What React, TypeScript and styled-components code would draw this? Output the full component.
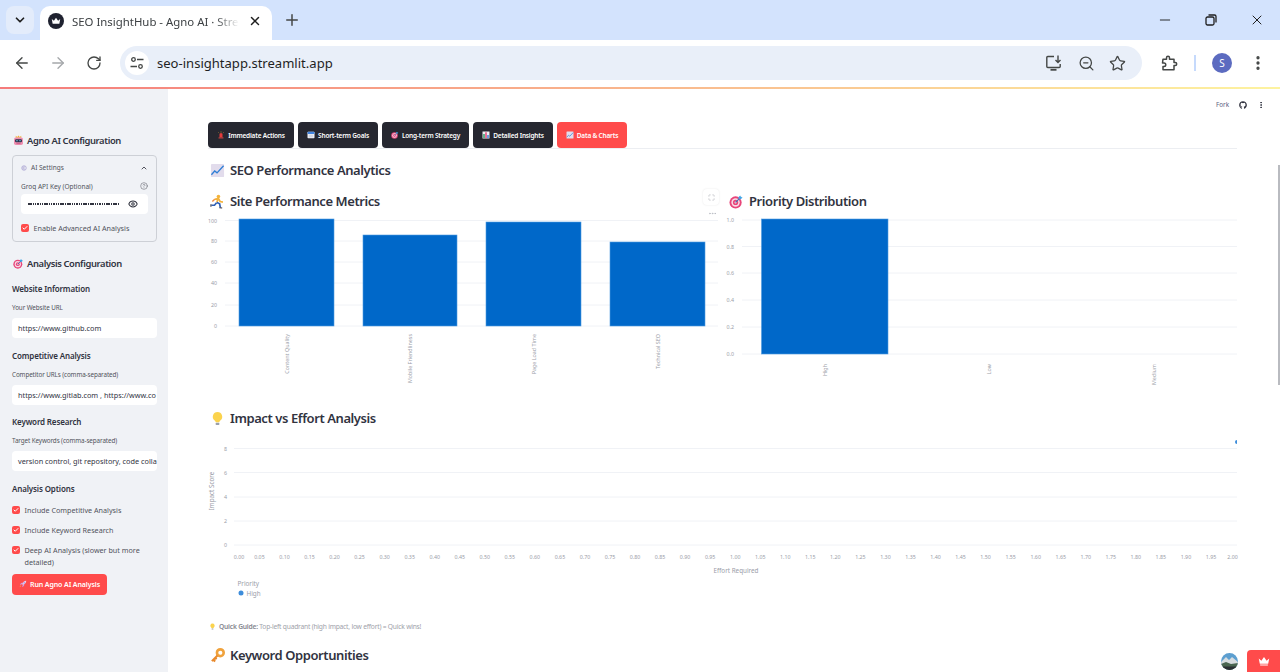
import React, { FC } from "react";
import styled, { createGlobalStyle } from "styled-components";
import {
  ArrowLeft,
  ArrowRight,
  Check,
  ChevronDown,
  ChevronUp,
  CircleHelp,
  EllipsisVertical,
  Eye,
  Maximize,
  Minus,
  MoreHorizontal,
  Plus,
  RotateCw,
  Star,
  X,
  ZoomOut,
} from "lucide-react";
import { FaGithub } from "react-icons/fa";

const GlobalStyle = createGlobalStyle`
  html, body {
    margin: 0;
    padding: 0;
    height: 100%;
    overflow: hidden;
    background: #fff;
  }
  * {
    box-sizing: border-box;
  }
  #root {
    height: 672px;
  }
`;

const APP_FONT = `"Noto Sans", "Open Sans", sans-serif`;
const CHROME_FONT = `"Noto Sans", "Open Sans", sans-serif`;

const Page = styled.div`
  position: relative;
  width: 1280px;
  height: 672px;
  overflow: hidden;
  display: flex;
  flex-direction: column;
  font-family: ${APP_FONT};
  color: #31333f;
`;

/* browser frame */
const TabStrip = styled.div`
  height: 40px;
  flex: none;
  background: #d3e3fd;
  display: flex;
  align-items: flex-end;
  padding-left: 6px;
  color: #1f1f1f;
`;
const TabSearch = styled.div`
  width: 28px;
  height: 28px;
  margin-bottom: 6px;
  border-radius: 8px;
  background: #e3ecfb;
  display: flex;
  align-items: center;
  justify-content: center;
`;
const BrowserTab = styled.div`
  width: 232px;
  height: 34px;
  margin-left: 6px;
  padding: 0 8px 4px 8px;
  background: #fff;
  border-radius: 10px 10px 0 0;
  display: flex;
  align-items: center;
`;
const TabTitle = styled.span`
  margin-left: 8px;
  width: 167px;
  overflow: hidden;
  white-space: nowrap;
  font-family: ${CHROME_FONT};
  font-size: 11.4px;
  color: #3c4043;
  mask-image: linear-gradient(90deg, #000 86%, transparent);
`;
const TabClose = styled.span`
  display: flex;
  margin-left: 9px;
`;
const NewTab = styled.div`
  display: flex;
  margin: 0 0 11px 11px;
  color: #444746;
`;
const WindowControls = styled.div`
  margin-left: auto;
  height: 40px;
  display: flex;
  align-items: center;
  gap: 30px;
  padding-right: 15px;
`;
const WindowIcon = styled.span`
  width: 16px;
  display: flex;
  justify-content: center;
`;
const Toolbar = styled.div`
  height: 47px;
  flex: none;
  background: #fff;
  display: flex;
  align-items: flex-start;
  padding: 6px 0 0 13px;
  border-radius: 8px 8px 0 0;
  position: relative;
  z-index: 1;
`;
const NavIcon = styled.span<{ $muted?: boolean }>`
  width: 18px;
  height: 34px;
  margin-right: 18px;
  display: flex;
  align-items: center;
  justify-content: center;
  color: ${(p) => (p.$muted ? "#a5a8ab" : "#444746")};
`;
const Omnibox = styled.div`
  width: 1022px;
  height: 34px;
  margin-left: -1px;
  border-radius: 17px;
  background: #e9eff9;
  display: flex;
  align-items: center;
  padding: 0 16px 0 5px;
  color: #444746;
`;
const SiteInfo = styled.span`
  width: 24px;
  height: 24px;
  border-radius: 50%;
  background: #fff;
  display: flex;
  align-items: center;
  justify-content: center;
`;
const UrlText = styled.span`
  margin-left: 8px;
  font-family: ${CHROME_FONT};
  font-size: 13.05px;
  color: #1f1f1f;
`;
const OmniActions = styled.div`
  margin-left: auto;
  display: flex;
  align-items: center;
  gap: 14.5px;
`;
const ToolbarRight = styled.div`
  display: flex;
  align-items: center;
  height: 34px;
  margin-left: 18px;
  color: #444746;
`;
const ToolbarDivider = styled.span`
  width: 2px;
  height: 16px;
  margin: 0 16px 0 16px;
  background: #c6dafc;
`;
const ProfileBadge = styled.span`
  width: 20px;
  height: 20px;
  border-radius: 50%;
  background: #5c6bc0;
  color: #fff;
  font-family: ${CHROME_FONT};
  font-size: 10px;
  display: flex;
  align-items: center;
  justify-content: center;
  margin-right: 17px;
`;
const Decoration = styled.div`
  height: 2px;
  flex: none;
  background: linear-gradient(90deg, #f57b7b, #fdf3a0);
`;

/* streamlit app */
const Body = styled.div`
  flex: 1;
  min-height: 0;
  display: flex;
`;
const Sidebar = styled.aside`
  width: 168px;
  flex: none;
  background: #f0f2f6;
  padding: 44px 11px 0 12px;
`;
const SideTitle = styled.div<{ $top?: number }>`
  height: 14px;
  margin-top: ${(p) => p.$top ?? 0}px;
  display: flex;
  align-items: center;
  gap: 3px;
  font-size: 9.4px;
  font-weight: 600;
  letter-spacing: -0.38px;
  white-space: nowrap;
  padding-left: 1px;
`;
const Expander = styled.div`
  margin-top: 8px;
  height: 87px;
  border: 1px solid #cdd0d6;
  border-radius: 4px;
  padding: 0 8px;
`;
const ExpanderHead = styled.div`
  height: 23px;
  display: flex;
  align-items: center;
  gap: 4px;
  font-size: 6.5px;
  color: #50525c;
  & > svg:last-child {
    margin-left: auto;
    color: #31333f;
  }
`;
const KeyLabel = styled.div`
  height: 14px;
  display: flex;
  align-items: center;
  justify-content: space-between;
  font-size: 6.5px;
  color: #50525c;
`;
const KeyInput = styled.div`
  margin-top: 1px;
  height: 20px;
  background: #fff;
  border-radius: 4px;
  display: flex;
  align-items: center;
  justify-content: space-between;
  padding: 0 10px 0 7px;
`;
const KeyDots = styled.span`
  width: 91px;
  height: 1.5px;
  background: repeating-linear-gradient(90deg, #31333f 0 1.5px, transparent 1.5px 2.3px);
`;
const CheckRow = styled.label<{ $top?: number }>`
  display: flex;
  align-items: flex-start;
  gap: 4.5px;
  margin-top: ${(p) => p.$top ?? 0}px;
  font-size: 7.2px;
  line-height: 12px;
  color: #50525c;
`;
const CheckBox = styled.span`
  width: 8px;
  height: 8px;
  flex: none;
  margin-top: 2px;
  border-radius: 2px;
  background: #ff4b4b;
  color: #fff;
  display: flex;
  align-items: center;
  justify-content: center;
`;
const GroupTitle = styled.div<{ $top: number }>`
  height: 12px;
  line-height: 12px;
  margin-top: ${(p) => p.$top}px;
  font-size: 8px;
  font-weight: 600;
  letter-spacing: -0.15px;
`;
const FieldLabel = styled.div`
  height: 10px;
  line-height: 10px;
  margin-top: 8px;
  font-size: 6.3px;
  letter-spacing: -0.1px;
  color: #50525c;
  white-space: nowrap;
`;
const TextField = styled.div`
  height: 20px;
  margin-top: 5px;
  background: #fff;
  border-radius: 4px;
  padding: 0 5px 0 6px;
  font-size: 7.3px;
  line-height: 20px;
  color: #31333f;
  white-space: nowrap;
  overflow: hidden;
`;
const RunButton = styled.div`
  width: 95px;
  height: 21px;
  margin-top: 6px;
  border-radius: 4px;
  background: #ff4b4b;
  color: #fff;
  font-size: 7px;
  font-weight: 600;
  letter-spacing: -0.1px;
  display: flex;
  align-items: center;
  justify-content: center;
  gap: 3px;
`;

const Main = styled.main`
  position: relative;
  flex: 1;
  min-width: 0;
  padding: 33px 43px 0 40px;
  background: #fff;
`;
const AppHeader = styled.div`
  position: absolute;
  top: 11px;
  right: 15px;
  display: flex;
  align-items: center;
  gap: 10px;
  font-size: 6.3px;
  color: #5b6180;
`;
const TabList = styled.div`
  display: flex;
  gap: 4px;
  height: 27px;
  border-bottom: 1px solid #eceef2;
`;
const TabButton = styled.div<{ $w: number; $active?: boolean }>`
  width: ${(p) => p.$w}px;
  height: 26px;
  border-radius: 4px;
  background: ${(p) => (p.$active ? "#ff4b4b" : "#262730")};
  color: #fff;
  font-size: 6.5px;
  font-weight: 600;
  letter-spacing: -0.2px;
  display: flex;
  align-items: center;
  justify-content: center;
  gap: 3px;
  white-space: nowrap;
`;
const Heading = styled.h3<{ $top: number }>`
  height: 20px;
  margin: ${(p) => p.$top}px 0 0 0;
  display: flex;
  align-items: center;
  gap: 5px;
  font-size: 13px;
  font-weight: 600;
  letter-spacing: -0.42px;
  white-space: nowrap;
  padding-left: 2px;
`;
const ChartColumns = styled.div`
  display: grid;
  grid-template-columns: 510px 510px;
  column-gap: 9px;
`;
const ChartColumn = styled.section`
  position: relative;
`;
const ChartSvg = styled.svg`
  display: block;
  width: 100%;
  margin-top: 4px;
  font-family: ${APP_FONT};
  overflow: visible;
`;
const ChartTools = styled.div`
  position: absolute;
  top: 9px;
  right: -1px;
  width: 16px;
  height: 16px;
  border-radius: 4px;
  background: #fff;
  box-shadow: 0 0 2px rgba(0, 0, 0, 0.1);
  color: #9a9ca6;
  display: flex;
  align-items: center;
  justify-content: center;
`;
const ChartMore = styled.div`
  position: absolute;
  top: 29px;
  right: 1px;
  display: flex;
  color: #b6b8c0;
`;
const WideChart = styled(ChartSvg)`
  margin-top: 7px;
`;
const Caption = styled.p`
  margin: 15px 0 0 1px;
  height: 12px;
  display: flex;
  align-items: center;
  gap: 3px;
  font-size: 6.7px;
  letter-spacing: -0.22px;
  color: #a0a2aa;
  white-space: nowrap;
`;
const CaptionText = styled.span`
  & > b {
    color: #85878f;
    font-weight: 600;
  }
`;
const ScrollThumb = styled.div`
  position: absolute;
  top: 76px;
  right: 0;
  width: 2px;
  height: 220px;
  background: #b9bbc0;
`;
const AvatarBadge = styled.svg`
  position: absolute;
  right: 42px;
  bottom: 2px;
  width: 17px;
  height: 17px;
`;
const ManageButton = styled.div`
  position: absolute;
  right: 0;
  bottom: 0;
  width: 33px;
  height: 22px;
  border-radius: 4px 0 0 0;
  background: #ff4b4b;
  display: flex;
  align-items: center;
  justify-content: center;
`;

/* small drawings */
const CrownMark: FC<{ size: number; color: string }> = ({ size, color }) => (
  <svg width={size} height={size} viewBox="0 0 16 16">
    <path d="M2 5l3 2.6L8 3.4l3 4.2L14 5l-1.2 6.2H3.2z" fill={color} />
    <rect x="3.4" y="11.9" width="9.2" height="1.3" rx="0.5" fill={color} />
  </svg>
);

type EmojiKind =
  | "robot"
  | "target"
  | "chart"
  | "runner"
  | "bulb"
  | "key"
  | "rocket"
  | "siren"
  | "calendar"
  | "bars"
  | "gear";

const Emoji: FC<{ kind: EmojiKind; size: number }> = ({ kind, size }) => (
  <svg width={size} height={size} viewBox="0 0 16 16" style={{ flex: "none" }}>
    {kind === "robot" && (
      <>
        <path d="M4 1l2.2 2L8 .8 9.8 3 12 1v3H4z" fill="#f2b134" />
        <rect x="1.5" y="3.5" width="13" height="11" rx="2.5" fill="#ee8fb0" />
        <rect x="3" y="6" width="10" height="4.5" rx="1.5" fill="#2b2f4a" />
        <circle cx="5.8" cy="8.2" r="1" fill="#7fd4f5" />
        <circle cx="10.2" cy="8.2" r="1" fill="#7fd4f5" />
        <rect x="5" y="12" width="6" height="1.2" fill="#c75b86" />
      </>
    )}
    {kind === "target" && (
      <>
        <circle cx="7" cy="9" r="6.5" fill="#e8457a" />
        <circle cx="7" cy="9" r="4.5" fill="#f8dbe6" />
        <circle cx="7" cy="9" r="2.8" fill="#e8457a" />
        <circle cx="7" cy="9" r="1.1" fill="#f8dbe6" />
        <path d="M7 9l6-6" stroke="#3a78b5" strokeWidth="1.2" />
        <path d="M12 1.5l.6 1.7 1.9.5-2 2-2-.5-.5-1.8z" fill="#3fa7e8" />
      </>
    )}
    {kind === "chart" && (
      <>
        <rect x="1" y="1" width="14" height="14" rx="1" fill="#e2dcec" />
        <path d="M1.5 12.5L5 8.5l2.5 2L14.5 3" fill="none" stroke="#2f7fd6" strokeWidth="1.4" />
      </>
    )}
    {kind === "runner" && (
      <>
        <circle cx="9" cy="2.6" r="1.9" fill="#f3b33c" />
        <path d="M5 5.6l4-.8 1.8 3.2 3 .6M8.5 5l-1.2 4" fill="none" stroke="#f3b33c" strokeWidth="1.8" />
        <path d="M7.3 9l3 1.5.6 3.500M7 9.3L4.8 12 1.5 12" fill="none" stroke="#2f5fb5" strokeWidth="1.8" />
        <path d="M5 5.6L2.5 8" fill="none" stroke="#f2883c" strokeWidth="1.5" />
        <path d="M10 14.5l3 .5M1 11l0 2.500" stroke="#3f3f4f" strokeWidth="1.2" />
      </>
    )}
    {kind === "bulb" && (
      <>
        <path d="M8 1a5 5 0 0 0-3 9c.6.5 1 1.2 1 2h4c0-.8.4-1.5 1-2a5 5 0 0 0-3-9z" fill="#fbd34d" />
        <rect x="6" y="12.4" width="4" height="2.4" rx="0.8" fill="#9aa0ac" />
      </>
    )}
    {kind === "key" && (
      <>
        <circle cx="11" cy="5" r="3.6" fill="none" stroke="#f0a23c" strokeWidth="2.8" />
        <path d="M8 8l-6 6M3.5 12.5l2 2M5.5 10.5l1.5 1.5" stroke="#e8892c" strokeWidth="2.2" fill="none" />
      </>
    )}
    {kind === "rocket" && (
      <>
        <path d="M14.5 1.5c-4 .3-7 2.5-8.5 6.500l2 2c4-1.5 6.2-4.5 6.5-8.500z" fill="#e4d7f5" />
        <circle cx="10.3" cy="5.7" r="1.3" fill="#7c6fe0" />
        <path d="M5 9l-3 1 2-4 3-.5zM7 11l-1 3 4-2 .5-3z" fill="#c9a0e8" />
        <path d="M4 12l-2.500 2.500L2 11z" fill="#ffb347" />
      </>
    )}
    {kind === "siren" && (
      <>
        <path d="M5 13V7a3 3 0 0 1 6 0v6z" fill="#e33b3b" />
        <rect x="3" y="12.5" width="10" height="2.5" rx="0.6" fill="#b8423f" />
        <path d="M8 1v2M3 3l1.3 1.3M13 3l-1.3 1.3" stroke="#f2b134" strokeWidth="1.2" />
      </>
    )}
    {kind === "calendar" && (
      <>
        <rect x="1" y="1.5" width="14" height="13" rx="1.5" fill="#eef0f6" />
        <rect x="1" y="1.5" width="14" height="4.5" rx="1.5" fill="#3f83e0" />
        <path d="M3.5 8.5h9M3.5 11.5h9" stroke="#a9b2c6" strokeWidth="1" />
      </>
    )}
    {kind === "bars" && (
      <>
        <rect x="1" y="1" width="14" height="14" fill="#eef0f4" />
        <rect x="2.5" y="6" width="3" height="8" fill="#39a36b" />
        <rect x="6.5" y="2.5" width="3" height="11.5" fill="#e8457a" />
        <rect x="10.5" y="8" width="3" height="6" fill="#3f83e0" />
      </>
    )}
    {kind === "gear" && (
      <>
        <circle cx="8" cy="8" r="6" fill="none" stroke="#8f84c4" strokeWidth="1.5" />
        <path d="M10.4 6.3a3 3 0 1 0 0 3.4" fill="none" stroke="#8f84c4" strokeWidth="1.5" />
      </>
    )}
  </svg>
);

const TuneIcon: FC = () => (
  <svg width="16" height="16" viewBox="0 0 16 16" fill="none" stroke="#444746" strokeWidth="1.3">
    <circle cx="4.5" cy="4.5" r="1.8" />
    <path d="M8 4.5h6.5M1.5 11.5H8" />
    <circle cx="11.5" cy="11.5" r="1.8" />
  </svg>
);
const RestoreIcon: FC = () => (
  <svg width="12" height="12" viewBox="0 0 12 12" fill="none" stroke="#1f1f1f" strokeWidth="1.3">
    <rect x="1" y="3" width="8" height="8" rx="1.5" />
    <path d="M3.5 1h6A1.5 1.5 0 0 1 11 2.5v6" />
  </svg>
);
const InstallIcon: FC = () => (
  <svg width="18" height="18" viewBox="0 0 18 18" fill="none" stroke="#444746" strokeWidth="1.4">
    <path d="M9 2.5H2.8a1 1 0 0 0-1 1v9a1 1 0 0 0 1 1h11.4a1 1 0 0 0 1-1V10" />
    <path d="M5.5 15.8h6" strokeWidth="1.8" />
    <path d="M13 1.5v6.5M10.5 6L13 8.5 15.5 6" />
  </svg>
);
const PuzzleIcon: FC = () => (
  <svg width="18" height="18" viewBox="0 0 18 18" fill="none" stroke="#444746" strokeWidth="1.5">
    <path d="M3 5.2h3.500V3.7a1.5 1.5 0 0 1 3 0v1.500H14v3.300h1.200a1.5 1.5 0 0 1 0 3H14v4.300H3v-3.300h1a1.5 1.5 0 0 0 0-3.500H2.500z" strokeLinejoin="round" />
  </svg>
);

/* charts */
interface Bar {
  label: string;
  top: number;
  left: number;
  right: number;
}
interface Tick {
  label: string;
  y: number;
}

const AXIS_GREY = "#9a9da8";
const GRID_GREY = "#f0f2f6";
const BAR_BLUE = "#0068c9";

const METRIC_TICKS: Tick[] = [
  { label: "100", y: 5.5 },
  { label: "80", y: 26 },
  { label: "60", y: 47 },
  { label: "40", y: 68 },
  { label: "20", y: 90 },
  { label: "0", y: 111 },
];
const METRIC_BARS: Bar[] = [
  { label: "Content Quality", top: 4, left: 31, right: 126 },
  { label: "Mobile Friendliness", top: 20, left: 155, right: 249 },
  { label: "Page Load Time", top: 7, left: 278, right: 373 },
  { label: "Technical SEO", top: 27, left: 402, right: 497 },
];
const PRIORITY_TICKS: Tick[] = [
  { label: "1.0", y: 5 },
  { label: "0.8", y: 31.5 },
  { label: "0.6", y: 58 },
  { label: "0.4", y: 85 },
  { label: "0.2", y: 112 },
  { label: "0.0", y: 139 },
];
const PRIORITY_BARS: Bar[] = [
  { label: "High", top: 4, left: 34.5, right: 161 },
  { label: "Low", top: 139, left: 199, right: 325 },
  { label: "Medium", top: 139, left: 363, right: 490 },
];

const BarChart: FC<{
  ticks: Tick[];
  bars: Bar[];
  gridLeft: number;
  labelRight: number;
  labelGap: number;
  height: number;
}> = ({ ticks, bars, gridLeft, labelRight, labelGap, height }) => {
  const base = ticks[ticks.length - 1].y;
  return (
    <ChartSvg viewBox={`0 0 510 ${height}`} height={height}>
      {ticks.map((t) => (
        <g key={t.label}>
          <line x1={gridLeft} x2={510} y1={t.y} y2={t.y} stroke={GRID_GREY} />
          <text x={labelRight} y={t.y + 2} textAnchor="end" fontSize="5.3" fill={AXIS_GREY}>
            {t.label}
          </text>
        </g>
      ))}
      {bars.map((b) => (
        <g key={b.label}>
          {base > b.top && (
            <rect
              x={b.left}
              y={b.top}
              width={b.right - b.left}
              height={base - b.top}
              fill={BAR_BLUE}
              stroke="#4f9be0"
              strokeWidth="0.6"
            />
          )}
          <text
            transform={`translate(${(b.left + b.right) / 2 + 2} ${base + labelGap}) rotate(-90)`}
            textAnchor="end"
            fontSize="5.4"
            fill={AXIS_GREY}
          >
            {b.label}
          </text>
        </g>
      ))}
    </ChartSvg>
  );
};

const EFFORT_TICKS = Array.from({ length: 41 }, (_, i) => i);
const IMPACT_TICKS = [
  { label: "8", y: 13.5 },
  { label: "6", y: 37.5 },
  { label: "4", y: 62 },
  { label: "2", y: 86 },
  { label: "0", y: 110 },
];

const ImpactChart: FC = () => (
  <WideChart viewBox="0 0 1029 170" height={170}>
    {IMPACT_TICKS.map((t) => (
      <g key={t.label}>
        <line x1={26} x2={1029} y1={t.y} y2={t.y} stroke={GRID_GREY} />
        <text x={19} y={t.y + 2} textAnchor="end" fontSize="5.3" fill={AXIS_GREY}>
          {t.label}
        </text>
      </g>
    ))}
    {EFFORT_TICKS.map((i) => {
      const natural = 26.4 + i * 25.04;
      const x = i === 0 ? 31 : i === 40 ? 1024.5 : natural;
      return (
        <text key={i} x={x} y={124} textAnchor="middle" fontSize="5.3" fill={AXIS_GREY}>
          {(i * 0.05).toFixed(2)}
        </text>
      );
    })}
    <text
      transform="translate(6 56) rotate(-90)"
      textAnchor="middle"
      fontSize="6.3"
      fill={AXIS_GREY}
    >
      Impact Score
    </text>
    <text x={528} y={138} textAnchor="middle" fontSize="6.3" fill={AXIS_GREY}>
      Effort Required
    </text>
    <path d="M1029 5a2 2 0 0 0 0 4z" fill="#3d8ddb" />
    <text x={29.5} y={150.5} fontSize="6.3" fill={AXIS_GREY}>
      Priority
    </text>
    <circle cx={33} cy={158} r={2.5} fill="#3d8ddb" />
    <text x={38.5} y={160.5} fontSize="6.3" fill={AXIS_GREY}>
      High
    </text>
  </WideChart>
);

const App: FC = () => (
  <Page>
    <GlobalStyle />
    <TabStrip>
      <TabSearch>
        <ChevronDown size={14} strokeWidth={3} />
      </TabSearch>
      <BrowserTab>
        <svg width="16" height="16" viewBox="0 0 16 16">
          <circle cx="8" cy="8" r="8" fill="#1f2230" />
          <g transform="translate(2.4 2.4) scale(0.7)">
            <path d="M2 5l3 2.6L8 3.4l3 4.2L14 5l-1.2 7H3.2z" fill="#fff" />
          </g>
        </svg>
        <TabTitle>SEO InsightHub - Agno AI · Streamlit</TabTitle>
        <TabClose>
          <X size={14} strokeWidth={2.5} />
        </TabClose>
      </BrowserTab>
      <NewTab>
        <Plus size={18} strokeWidth={2} />
      </NewTab>
      <WindowControls>
        <WindowIcon>
          <Minus size={18} strokeWidth={1.4} />
        </WindowIcon>
        <WindowIcon>
          <RestoreIcon />
        </WindowIcon>
        <WindowIcon>
          <X size={20} strokeWidth={1.5} />
        </WindowIcon>
      </WindowControls>
    </TabStrip>
    <Toolbar>
      <NavIcon>
        <ArrowLeft size={18} strokeWidth={1.8} />
      </NavIcon>
      <NavIcon $muted>
        <ArrowRight size={18} strokeWidth={1.8} />
      </NavIcon>
      <NavIcon>
        <RotateCw size={16} strokeWidth={2} />
      </NavIcon>
      <Omnibox>
        <SiteInfo>
          <TuneIcon />
        </SiteInfo>
        <UrlText>seo-insightapp.streamlit.app</UrlText>
        <OmniActions>
          <InstallIcon />
          <ZoomOut size={17} strokeWidth={1.8} />
          <Star size={17} strokeWidth={1.8} />
        </OmniActions>
      </Omnibox>
      <ToolbarRight>
        <PuzzleIcon />
        <ToolbarDivider />
        <ProfileBadge>S</ProfileBadge>
        <EllipsisVertical size={18} strokeWidth={2.4} />
      </ToolbarRight>
    </Toolbar>
    <Decoration />
    <Body>
      <Sidebar>
        <SideTitle>
          <Emoji kind="robot" size={11} />
          Agno AI Configuration
        </SideTitle>
        <Expander>
          <ExpanderHead>
            <Emoji kind="gear" size={6} />
            AI Settings
            <ChevronUp size={8} strokeWidth={2.5} />
          </ExpanderHead>
          <KeyLabel>
            Groq API Key (Optional)
            <CircleHelp size={8} strokeWidth={1.5} />
          </KeyLabel>
          <KeyInput>
            <KeyDots />
            <Eye size={10} strokeWidth={2.5} />
          </KeyInput>
          <CheckRow $top={8}>
            <CheckBox>
              <Check size={6} strokeWidth={4} />
            </CheckBox>
            Enable Advanced AI Analysis
          </CheckRow>
        </Expander>
        <SideTitle $top={14}>
          <Emoji kind="target" size={11} />
          Analysis Configuration
        </SideTitle>
        <GroupTitle $top={13}>Website Information</GroupTitle>
        <FieldLabel>Your Website URL</FieldLabel>
        <TextField>https://www.github.com</TextField>
        <GroupTitle $top={11.5}>Competitive Analysis</GroupTitle>
        <FieldLabel>Competitor URLs (comma-separated)</FieldLabel>
        <TextField>https://www.gitlab.com , https://www.co</TextField>
        <GroupTitle $top={11.5}>Keyword Research</GroupTitle>
        <FieldLabel>Target Keywords (comma-separated)</FieldLabel>
        <TextField>version control, git repository, code colla</TextField>
        <GroupTitle $top={11.5}>Analysis Options</GroupTitle>
        <CheckRow $top={9}>
          <CheckBox>
            <Check size={6} strokeWidth={4} />
          </CheckBox>
          Include Competitive Analysis
        </CheckRow>
        <CheckRow $top={8}>
          <CheckBox>
            <Check size={6} strokeWidth={4} />
          </CheckBox>
          Include Keyword Research
        </CheckRow>
        <CheckRow $top={8}>
          <CheckBox>
            <Check size={6} strokeWidth={4} />
          </CheckBox>
          Deep AI Analysis (slower but more detailed)
        </CheckRow>
        <RunButton>
          <Emoji kind="rocket" size={8} />
          Run Agno AI Analysis
        </RunButton>
      </Sidebar>
      <Main>
        <AppHeader>
          Fork
          <FaGithub size={8} color="#31333f" />
          <EllipsisVertical size={8} strokeWidth={3} color="#31333f" />
        </AppHeader>
        <TabList>
          <TabButton $w={86}>
            <Emoji kind="siren" size={8} />
            Immediate Actions
          </TabButton>
          <TabButton $w={80}>
            <Emoji kind="calendar" size={8} />
            Short-term Goals
          </TabButton>
          <TabButton $w={87}>
            <Emoji kind="target" size={8} />
            Long-term Strategy
          </TabButton>
          <TabButton $w={80}>
            <Emoji kind="bars" size={8} />
            Detailed Insights
          </TabButton>
          <TabButton $w={70} $active>
            <Emoji kind="chart" size={8} />
            Data &amp; Charts
          </TabButton>
        </TabList>
        <Heading $top={11}>
          <Emoji kind="chart" size={15} />
          SEO Performance Analytics
        </Heading>
        <ChartColumns>
          <ChartColumn>
            <Heading $top={11}>
              <Emoji kind="runner" size={15} />
              Site Performance Metrics
            </Heading>
            <BarChart
              ticks={METRIC_TICKS}
              bars={METRIC_BARS}
              gridLeft={17}
              labelRight={9}
              labelGap={8}
              height={175}
            />
            <ChartTools>
              <Maximize size={7} strokeWidth={1.5} />
            </ChartTools>
            <ChartMore>
              <MoreHorizontal size={9} strokeWidth={2} />
            </ChartMore>
          </ChartColumn>
          <ChartColumn>
            <Heading $top={11}>
              <Emoji kind="target" size={15} />
              Priority Distribution
            </Heading>
            <BarChart
              ticks={PRIORITY_TICKS}
              bars={PRIORITY_BARS}
              gridLeft={15}
              labelRight={7}
              labelGap={10}
              height={175}
            />
          </ChartColumn>
        </ChartColumns>
        <Heading $top={18}>
          <Emoji kind="bulb" size={15} />
          Impact vs Effort Analysis
        </Heading>
        <ImpactChart />
        <Caption>
          <Emoji kind="bulb" size={7} />
          <CaptionText>
            <b>Quick Guide:</b> Top-left quadrant (high impact, low effort) = Quick wins!
          </CaptionText>
        </Caption>
        <Heading $top={13}>
          <Emoji kind="key" size={15} />
          Keyword Opportunities
        </Heading>
        <ScrollThumb />
        <AvatarBadge viewBox="0 0 17 17">
          <defs>
            <clipPath id="avatar-clip">
              <circle cx="8.5" cy="8.5" r="8.5" />
            </clipPath>
          </defs>
          <g clipPath="url(#avatar-clip)">
            <rect width="17" height="17" fill="#5d9fd0" />
            <path d="M0 9l5-5 3 3 3-3 6 5v8H0z" fill="#d8dde0" />
            <path d="M0 11l5-2 5 2 7-1v7H0z" fill="#4a6650" />
            <rect y="13.5" width="17" height="3.5" fill="#2a2f33" />
          </g>
        </AvatarBadge>
        <ManageButton>
          <CrownMark size={14} color="#fff" />
        </ManageButton>
      </Main>
    </Body>
  </Page>
);

export default App;
